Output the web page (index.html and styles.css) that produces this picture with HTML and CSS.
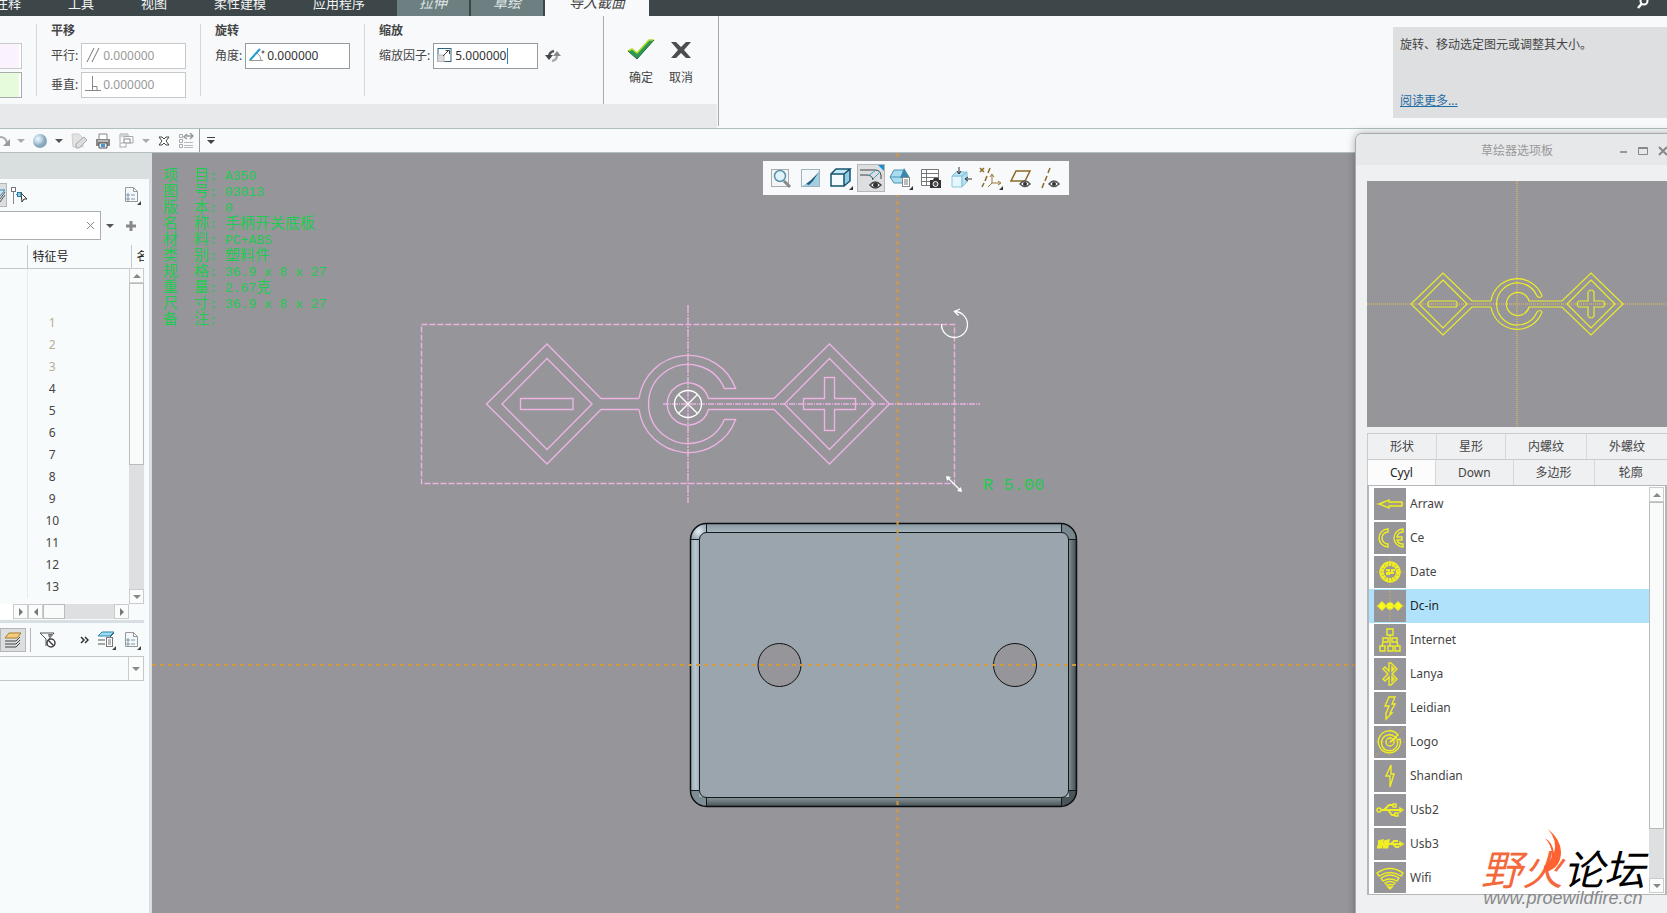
FILE: index.html
```html
<!DOCTYPE html>
<html lang="zh-CN">

<head>
  <meta charset="UTF-8" />
  <meta name="viewport" content="width=device-width, initial-scale=1.0">
  <title>导入截面</title>
  <link rel="stylesheet" href="styles.css">
</head>

<body>
  <nav class="menubar">
    <a href="#">注释</a>
    <a href="#">工具</a>
    <a href="#">视图</a>
    <a href="#">柔性建模</a>
    <a href="#">应用程序</a>
    <div class="tabs">
      <button class="tab">拉伸</button>
      <button class="tab">草绘</button>
      <button class="tab active">导入截面</button>
    </div>
    <button class="menu-search" aria-label="搜索">
      <svg width="12" height="12" viewBox="0 0 12 12"><circle cx="7" cy="4" r="3.5" fill="none" stroke="#fff" stroke-width="2"/><path d="M4.500 7 1 11" stroke="#fff" stroke-width="2.500"/></svg>
    </button>
  </nav>

  <header class="ribbon">
    <div class="ribbon-main">
      <div class="groups">
        <div class="group refs">
          <input type="text" class="ref ref-pink" aria-label="参考 1">
          <input type="text" class="ref ref-green" aria-label="参考 2">
        </div>
        <div class="group">
          <h3>平移</h3>
          <div class="field">
            <label for="parallel">平行:</label>
            <div class="box">
              <svg width="16" height="18" viewBox="0 0 16 18"><path d="M2 16 9 2M7 16 14 2" stroke="#777" fill="none"/></svg>
              <input type="text" id="parallel" value="0.000000" disabled>
            </div>
          </div>
          <div class="field">
            <label for="vertical">垂直:</label>
            <div class="box">
              <svg width="16" height="18" viewBox="0 0 16 18"><path d="M0 15.500h16M7.500 1v14M8 11.500h4V15" stroke="#888" fill="none"/></svg>
              <input type="text" id="vertical" value="0.000000" disabled>
            </div>
          </div>
        </div>
        <div class="group">
          <h3>旋转</h3>
          <div class="field">
            <label for="angle">角度:</label>
            <div class="box enabled">
              <svg width="16" height="18" viewBox="0 0 16 18"><path d="M1 14 11 3" stroke="#1f9ad6" stroke-width="2"/><path d="M0 14.500h14M8 7q4 3 4 7" stroke="#999" fill="none"/><circle cx="14" cy="6" r="1" fill="none" stroke="#444"/></svg>
              <input type="text" id="angle" value="0.000000">
            </div>
          </div>
        </div>
        <div class="group scale">
          <h3>缩放</h3>
          <div class="field">
            <label for="factor">缩放因子:</label>
            <div class="box enabled">
              <svg width="16" height="18" viewBox="0 0 16 18"><rect x="1" y="2.500" width="13" height="13" fill="#fff" stroke="#2a6480"/><rect x="1" y="9" width="6" height="6.500" fill="#ddd" stroke="#bbb"/><path d="m6 10 6-6M8.500 4.500h4V8" fill="none" stroke="#444"/></svg>
              <input type="text" id="factor" value="5.000000">
              <span class="caret"></span>
            </div>
            <button class="flip" aria-label="反向">
              <svg width="16" height="14" viewBox="0 0 16 14"><path d="M4 8q0-5 5-6" fill="none" stroke="#555" stroke-width="2.500"/><path d="M0 6h8L4 11z" fill="#444"/><path d="M12 6q0 5-5 6" fill="none" stroke="#aaa" stroke-width="2.500"/><path d="M8 7h8l-4-5z" fill="#888"/></svg>
            </button>
          </div>
        </div>
        <div class="group confirm">
          <button>
            <svg width="30" height="22" viewBox="0 0 30 22"><path d="m2 12 4-2 5 4L23 1h5L11 20z" fill="#2b9a52"/><path d="m2 12 4-2 5 4L23 1h5" fill="none" stroke="#b4d92c" stroke-width="1.500"/><path d="m2 12 9 8L28 1" fill="none" stroke="#1d6b3b"/></svg>
            确定
          </button>
          <button>
            <svg width="22" height="22" viewBox="0 0 22 22"><path d="M1 3h5l5 5 5-5h5l-7 8 7 8h-5l-5-5-5 5H1l7-8z" fill="#4b4d4f"/></svg>
            取消
          </button>
        </div>
      </div>
      <div class="ribbon-foot"></div>
    </div>
    <div class="help">
      <p>旋转、移动选定图元或调整其大小。</p>
      <a href="#">阅读更多...</a>
    </div>
  </header>

  <div class="quickbar">
    <button aria-label="重做"><svg width="10" height="16" viewBox="0 0 10 16"><path d="M0 4q6 0 7 6" fill="none" stroke="#aaa" stroke-width="2"/><path d="M10 6v7H3z" fill="#999"/></svg></button>
    <i class="arrow dim"></i>
    <button class="sphere" aria-label="着色"><svg width="16" height="16" viewBox="0 0 16 16"><defs><radialGradient id="ball" cx=".35" cy=".35"><stop offset="0" stop-color="#f2f8fc"/><stop offset=".6" stop-color="#b4cfe2"/><stop offset="1" stop-color="#8aa6bb"/></radialGradient></defs><circle cx="8" cy="8" r="7" fill="url(#ball)"/></svg></button>
    <i class="arrow"></i>
    <button aria-label="拭除"><svg width="16" height="16" viewBox="0 0 16 16"><path d="M1 1h7l4 4v9H2z" fill="#e2e2e2" stroke="#ccc"/><path d="m5 11 8-7 3 3-8 8H5z" fill="#ddd" stroke="#aaa"/></svg></button>
    <button aria-label="打印"><svg width="16" height="16" viewBox="0 0 16 16"><path d="M4 7V1h8v6" fill="#fff" stroke="#888"/><path d="M1 6h14v7H1z" fill="#888"/><path d="M3 8h10" stroke="#eee"/><path d="M4 10h8v5H4z" fill="#e8f3fa" stroke="#555"/><path d="M6 11h4v3H6z" fill="#4d94c7"/></svg></button>
    <button aria-label="窗口"><svg width="16" height="16" viewBox="0 0 16 16"><path d="M1 9V1h8v2M5 5V3.500h9V10h-3M2 3h6" fill="none" stroke="#aaa"/><rect x="5" y="6" width="6" height="4" fill="#fff" stroke="#888"/><rect x="1" y="10" width="6" height="4" fill="#fff" stroke="#aaa"/></svg></button>
    <i class="arrow dim"></i>
    <button aria-label="关闭窗口"><svg width="12" height="12" viewBox="0 0 12 12"><path d="M1 2h3l2 2 2-2h3L8 6l3 4H8L6 8l-2 2H1l3-4z" fill="#fff" stroke="#444"/></svg></button>
    <button aria-label="选项"><svg width="16" height="16" viewBox="0 0 16 16"><path d="M1.500 1.500h3v3h-3zM1.500 6.500h3v3h-3zM1.500 11.500h3v3h-3z" fill="none" stroke="#aaa"/><path d="M6 9.500h9M6 12.500h9M6 14.500h9" stroke="#bbb"/><path d="M8 3h6M12 0l3 3-3 3M9 1 6 4l3 2" fill="none" stroke="#999" stroke-width="1.500"/></svg></button>
    <button class="more" aria-label="更多"><svg width="10" height="10" viewBox="0 0 10 10"><path d="M1 1h8v1H1zM1 4h8L5 8z" fill="#444"/></svg></button>
  </div>

  <div class="workspace">
    <aside class="tree">
      <div class="tree-cap"></div>
      <div class="tree-tools">
        <button class="pressed cut" aria-label="模型树"><svg width="6" height="18" viewBox="0 0 6 18"><path d="M0 4h5l-5 6" fill="none" stroke="#268fc0"/><path d="M0 13l5-7M0 16l5-7" fill="none" stroke="#555"/></svg></button>
        <button class="pick" aria-label="选择"><svg width="17" height="17" viewBox="0 0 17 17"><path d="M2.500 5v12M5 7.500h2" stroke="#888"/><rect x=".5" y=".5" width="4" height="4" fill="#fff" stroke="#777"/><rect x="6.500" y="5.500" width="4" height="4" fill="#7fd3f3" stroke="#287a9c"/><path d="m10 6 1 9 2-3h3z" fill="#fff" stroke="#333"/></svg></button>
        <button class="report" aria-label="设置"><svg width="17" height="20" viewBox="0 0 17 20"><path d="M1.500 2.500h8l4 4v10h-12z" fill="#f4f8fa" stroke="#999"/><path d="M9.500 2.500v4h4" fill="none" stroke="#999"/><path d="M3 9h2v2H3zM3 13h2v2H3z" fill="none" stroke="#7e99ad"/><path d="M7 10h4M7 14h4" stroke="#7e99ad"/><path d="M17 16v4h-4z" fill="#444"/></svg></button>
      </div>
      <div class="tree-search">
        <input type="text" aria-label="搜索模型树">
        <button class="clear" aria-label="清除"><svg width="9" height="9" viewBox="0 0 9 9"><path d="m1 1 7 7M8 1 1 8" stroke="#888"/></svg></button>
        <i class="arrow"></i>
        <button class="add" aria-label="添加"><svg width="12" height="12" viewBox="0 0 12 12"><path d="M6 1v10M1 6h10" stroke="#888" stroke-width="3"/></svg></button>
      </div>
      <div class="tree-body">
        <table>
          <thead>
            <tr><th></th><th>特征号</th><th>名称</th></tr>
          </thead>
          <tbody>
            <tr><td></td><td></td><td></td></tr>
            <tr><td></td><td></td><td></td></tr>
            <tr class="dim"><td></td><td>1</td><td></td></tr>
            <tr class="dim"><td></td><td>2</td><td></td></tr>
            <tr class="dim"><td></td><td>3</td><td></td></tr>
            <tr><td></td><td>4</td><td></td></tr>
            <tr><td></td><td>5</td><td></td></tr>
            <tr><td></td><td>6</td><td></td></tr>
            <tr><td></td><td>7</td><td></td></tr>
            <tr><td></td><td>8</td><td></td></tr>
            <tr><td></td><td>9</td><td></td></tr>
            <tr><td></td><td>10</td><td></td></tr>
            <tr><td></td><td>11</td><td></td></tr>
            <tr><td></td><td>12</td><td></td></tr>
            <tr><td></td><td>13</td><td></td></tr>
          </tbody>
        </table>
        <div class="vscroll">
          <b class="up"></b>
          <div class="thumb"></div>
          <b class="down"></b>
        </div>
      </div>
      <div class="hscroll">
        <div class="names"><b class="right"></b></div>
        <b class="left"></b>
        <div class="thumb"></div>
        <b class="right"></b>
      </div>
      <div class="tree-foot">
        <button class="pressed" aria-label="层"><svg width="18" height="18" viewBox="0 0 18 18"><path d="M5 2h12l-4 5H1z" fill="#f5cd7d" stroke="#a77a2c"/><path d="M1 10h11l4-4M1 13h11l4-4M1 16h11l4-4" fill="none" stroke="#444"/></svg></button>
        <span class="sep"></span>
        <button class="filter" aria-label="过滤"><svg width="18" height="18" viewBox="0 0 18 18"><path d="M1 2h14l-5 6v2M1 2l6 6v7" fill="none" stroke="#555"/><path d="M9 3h5l-4 4z" fill="#777"/><circle cx="12" cy="12" r="4" fill="#fff" stroke="#444" stroke-width="1.500"/><path d="m9 9 6 6" stroke="#444" stroke-width="1.500"/></svg></button>
        <button class="chev" aria-label="更多"><svg width="9" height="8" viewBox="0 0 9 8"><path d="m1 1 3 3-3 3M5 1l3 3-3 3" fill="none" stroke="#333" stroke-width="1.500"/></svg></button>
        <button aria-label="层显示"><svg width="19" height="20" viewBox="0 0 19 20"><path d="M5 2h12l-4 4H1z" fill="#9edcf5" stroke="#2b85ab"/><path d="M1 10h7M1 14h7M13 7l4-4" stroke="#555"/><rect x="9.500" y="7.500" width="6" height="9" fill="#fff" stroke="#777"/><path d="M11 10h3M11 12h3M11 14h3" stroke="#777"/><path d="M19 16v4h-4z" fill="#444"/></svg></button>
        <button aria-label="层设置"><svg width="17" height="20" viewBox="0 0 17 20"><path d="M1.500 2.500h8l4 4v10h-12z" fill="#f4f8fa" stroke="#999"/><path d="M9.500 2.500v4h4" fill="none" stroke="#999"/><path d="M3 9h2v2H3zM3 13h2v2H3z" fill="none" stroke="#7e99ad"/><path d="M7 10h4M7 14h4" stroke="#7e99ad"/><path d="M17 16v4h-4z" fill="#444"/></svg></button>
      </div>
      <div class="combo">
        <select aria-label="层模型"><option></option></select>
        <b class="down"></b>
      </div>
    </aside>

    <main class="canvas">
      <svg class="drawing" viewBox="152 153 1515 760" preserveAspectRatio="xMinYMin slice">
        <defs>
          <linearGradient id="rimTop" x1="0" y1="0" x2="0" y2="1"><stop offset="0" stop-color="#8b99a1"/><stop offset="1" stop-color="#a9b7c1"/></linearGradient>
          <linearGradient id="rimLeft"><stop offset="0" stop-color="#9fadb6"/><stop offset=".6" stop-color="#b9c7d1"/><stop offset="1" stop-color="#a3b0b9"/></linearGradient>
          <linearGradient id="rimRight"><stop offset="0" stop-color="#879299"/><stop offset="1" stop-color="#3d484c"/></linearGradient>
          <linearGradient id="rimBottom" x1="0" y1="0" x2="0" y2="1"><stop offset="0" stop-color="#8c989f"/><stop offset="1" stop-color="#4a5559"/></linearGradient>
          <radialGradient id="shine"><stop offset="0" stop-color="#e4f0f7"/><stop offset="1" stop-color="#9fadb6"/></radialGradient>
        </defs>

        <!-- part -->
        <rect x="690.500" y="523.500" width="386" height="283" rx="16" fill="url(#rimLeft)"/>
        <path d="M691 539.500a16 16 0 0 1 15.500-16v9a7 7 0 0 0-7 7z" fill="url(#shine)"/>
        <path d="M1061 524a16 16 0 0 1 16 16h-9a7 7 0 0 0-7-7z" fill="#78868d"/>
        <path d="M691 790a16 16 0 0 0 16 16v-9h-8v-7z" fill="#7e8c93"/>
        <path d="M1077 790a16 16 0 0 1-16 16v-9h8v-7z" fill="#4a5559"/>
        <path d="M706.500 524H1061v9H706.500z" fill="url(#rimTop)"/>
        <path d="M691 539.500h8V790h-8z" fill="url(#rimLeft)"/>
        <path d="M1068 539.500h9V790h-9z" fill="url(#rimRight)"/>
        <path d="M706.500 797H1061v9H706.500z" fill="url(#rimBottom)"/>
        <rect x="690.500" y="523.500" width="386" height="283" rx="16" fill="none" stroke="#0b0f11" stroke-width="1.500"/>
        <rect x="699.500" y="532.500" width="369" height="265" rx="7" fill="#9aa5ad" stroke="#15191b"/>
        <path d="M706.500 524v9M1061.500 524v9M706.500 797v9M1061.500 797v9M691 539.500h8M691 790.500h8M1068 539.500h9M1068 790.500h9" stroke="#15191b"/>
        <circle cx="779.500" cy="665" r="21.500" fill="#96959a" stroke="#111"/>
        <circle cx="1015" cy="665" r="21.500" fill="#96959a" stroke="#111"/>

        <!-- datum planes -->
        <path d="M897.500 153v760M152 665h1205" stroke="#cf9b45" stroke-width="2" stroke-dasharray="4 4" fill="none"/>

        <!-- imported section -->
        <g fill="none" stroke="#ecb3e3" stroke-width="1.400">
          <path d="M421.500 324.500h533v159h-533z" stroke-dasharray="6 2"/>
          <path d="M688 305v198" stroke-dasharray="8 1 2 1"/>
          <path d="M663 404h317" stroke-dasharray="6 1 1 1"/>
          <path d="M639 398.500H601L547 344l-60.500 60L547 464l54-54.500h38"/>
          <path d="m547 358.500 45 45.500-45 45.500-45-45.500z"/>
          <path d="M520.500 398.500h52.500v11h-52.500z"/>
          <path d="M639 398.500a50 50 0 0 1 96.600-10H724.400a39.500 39.500 0 1 0 0 31h11.200a50 50 0 0 1-96.600-10"/>
          <path d="M774 398.500h-65.500a21 21 0 1 0 0 11H774l55.500 54.500 60-60-60-60z"/>
          <path d="m829.500 358.500 45 45.500-45 45.500-45-45.500z"/>
          <path d="M824.500 377.500h10v21h21v11h-21v21h-10v-21h-21v-11h21z"/>
        </g>
        <g fill="none" stroke="#fff" stroke-width="1.300">
          <circle cx="688" cy="404" r="13.500"/>
          <path d="m678.500 394.500 19 19M697.500 394.500l-19 19"/>
          <path d="M941.500 324a13 13 0 1 0 13-12.500M960 309l-5.500 2.500 4 4"/>
          <path d="m948 478 12 12"/>
        </g>
        <path d="m946 476 5 1-4 4zM962 492l-1-5-4 4z" fill="#fff"/>
      </svg>

      <dl class="props">
        <dt><span>项</span><span>目</span></dt><dd>A350</dd>
        <dt><span>图</span><span>号</span></dt><dd>03013</dd>
        <dt><span>版</span><span>本</span></dt><dd>0</dd>
        <dt><span>名</span><span>称</span></dt><dd><span>手柄开关底板</span></dd>
        <dt><span>材</span><span>料</span></dt><dd>PC+ABS</dd>
        <dt><span>类</span><span>别</span></dt><dd><span>塑料件</span></dd>
        <dt><span>规</span><span>格</span></dt><dd>36.9 x 8 x 27</dd>
        <dt><span>重</span><span>量</span></dt><dd>2.67<span>克</span></dd>
        <dt><span>尺</span><span>寸</span></dt><dd>36.9 x 8 x 27</dd>
        <dt><span>备</span><span>注</span></dt><dd></dd>
      </dl>
      <div class="dim-label">R 5.00</div>

      <div class="viewbar">
        <button aria-label="重新调整"><svg width="22" height="22" viewBox="0 0 22 22"><rect x="1.500" y="2.500" width="17" height="17" fill="#f5f5f5" stroke="#aaa"/><path d="m14 14 6 6" stroke="#888" stroke-width="3"/><circle cx="10" cy="9" r="5.500" fill="#dff3fb" stroke="#5b90ab" stroke-width="1.500"/></svg></button>
        <button aria-label="重画"><svg width="22" height="22" viewBox="0 0 22 22"><rect x="1.500" y="2.500" width="18" height="17" fill="#a5cfe0" stroke="#9db4bf"/><path d="M2 3h17q-2 9-10 12L2 19z" fill="#f4f8fa"/><path d="m6 17 5-4 8-8-6 9-4 4z" fill="#1e5f7d"/></svg></button>
        <button aria-label="显示样式"><svg width="24" height="24" viewBox="0 0 24 24"><path d="M2 8h13v12H2z" fill="#f4fbfe"/><path d="m2 8 5-5h14l-6 5z" fill="#c3e9f7"/><path d="m15 8 6-5v12l-6 5z" fill="#8fcde6"/><path d="M2 8h13v12H2zM2 8l5-5h14l-6 5M21 3v12l-6 5" fill="none" stroke="#16536e" stroke-width="1.500"/><path d="M24 20v4h-4z" fill="#333"/></svg></button>
        <button class="pressed" aria-label="草绘显示"><svg width="26" height="26" viewBox="0 0 26 26"><path d="M20 0h6v6z" fill="#1c8fd3"/><path d="M2 5h15q5 0 6 5v4M2 10h7q5 0 6 5" fill="none" stroke="#444"/><path d="m10 11 8-6M15 14l7-7" stroke="#3aa4ce"/><path d="M12 20q5-6 11 0-6 6-11 0z" fill="#fff" stroke="#444" stroke-width="1.500"/><circle cx="17.500" cy="20" r="2.500" fill="#333"/></svg></button>
        <button aria-label="已保存方向"><svg width="24" height="24" viewBox="0 0 24 24"><path d="m1 11 4-7h9l3 7-3 6H5z" fill="#a9dcf0" stroke="#4a93b0"/><path d="M1 11h16" stroke="#4a93b0"/><path d="m15 2 6 10h-10z" fill="#3c88ab"/><rect x="13.500" y="11.500" width="7" height="9" fill="#fff" stroke="#888"/><path d="M15 14h4M15 16h4M15 18h4" stroke="#777"/><path d="M24 20v4h-4z" fill="#333"/></svg></button>
        <button aria-label="视图管理器"><svg width="22" height="22" viewBox="0 0 22 22"><path d="M1.500 2.500h17v16h-17zM1.500 6.500h17M1.500 10.500h17M1.500 14.500h17M6.500 2.500v16" fill="#fff" stroke="#777"/><path d="M10 13h3l1-2h4l1 2h2v8H10z" fill="#333"/><circle cx="15.500" cy="17" r="2.500" fill="#555" stroke="#fff"/></svg></button>
        <button aria-label="透视图"><svg width="22" height="22" viewBox="0 0 22 22"><path d="M2 9h10v11H2z" fill="#e5f6fc" stroke="#8ec9df"/><path d="m2 9 4-4h11l-5 4zM12 9l5-4v10l-5 5z" fill="#b4e0f0" stroke="#86c2d8"/><path d="M9 0v6M7 4l2 3 2-3M22 12h-6M18 10l-3 2 3 2" fill="none" stroke="#333"/></svg></button>
        <button aria-label="基准显示"><svg width="24" height="24" viewBox="0 0 24 24"><path d="m1 2 4 4M5 2 1 6M11 2 9 7M8 10l-2 5M5 17l-2 4" stroke="#8a6a25" stroke-width="1.500"/><path d="M13 9v8h8M13 17l-4 4M11 11l2-3 2 3M19 15l3 2-3 2" fill="none" stroke="#9a7a33"/><path d="M24 20v4h-4z" fill="#333"/></svg></button>
        <button aria-label="平面显示"><svg width="22" height="22" viewBox="0 0 22 22"><path d="M6 4h14l-5 10H1z" fill="none" stroke="#8a6a25" stroke-width="1.500"/><path d="M10 17q5-6 10 0-5 5-10 0z" fill="#fff" stroke="#555" stroke-width="1.500"/><circle cx="15" cy="17" r="2" fill="#333"/></svg></button>
        <button aria-label="轴显示"><svg width="22" height="22" viewBox="0 0 22 22"><path d="M10 1 8 6M7 9l-2 5M4 16l-2 5" stroke="#8a6a25" stroke-width="1.500"/><path d="M9 17q5-6 10 0-5 5-10 0z" fill="#fff" stroke="#555" stroke-width="1.500"/><circle cx="14" cy="17" r="2" fill="#333"/></svg></button>
      </div>
    </main>
  </div>

  <section class="palette">
    <div class="palette-title">
      <h2>草绘器选项板</h2>
      <div class="win-buttons">
        <button aria-label="最小化"><svg width="10" height="10" viewBox="0 0 10 10"><path d="M2 6h7" stroke="#999" stroke-width="2"/></svg></button>
        <button aria-label="最大化"><svg width="10" height="10" viewBox="0 0 10 10"><path d="M.5 1.500h9v7h-9zM1 2.500h8" fill="none" stroke="#888"/></svg></button>
        <button aria-label="关闭"><svg width="10" height="10" viewBox="0 0 10 10"><path d="m1 1 8 8M9 1 1 9" stroke="#888" stroke-width="2"/></svg></button>
      </div>
    </div>
    <div class="palette-body">
      <svg class="preview" width="300" height="246" viewBox="1367 182 300 246">
        <path d="M1517 182v246M1367 305h300" stroke="#d8b466" stroke-width="1.500" stroke-dasharray="1 1"/>
        <g fill="none" stroke="#ecec2b" stroke-width="1.200">
          <path d="M1491 302h-19l-29-28-32 31 32 31 29-28h19"/>
          <path d="m1443 281 24 24-24 24-24-24z"/>
          <rect x="1428" y="302" width="29" height="6" rx="2"/>
          <path d="M1491 302a26.500 26.500 0 0 1 51-5q-2 3-5 0a21 21 0 1 0 0 16q3-3 5 0a26.500 26.500 0 0 1-51-5"/>
          <path d="M1562 302h-33a11.500 11.500 0 1 0 0 6h33l29 28 32-31-32-31z"/>
          <path d="m1591 281 24 24-24 24-24-24z"/>
          <path d="M1588 293q3-4 6 0v9h9q4 3 0 6h-9v9q-3 4-6 0v-9h-9q-4-3 0-6h9z"/>
        </g>
      </svg>
      <div class="cats">
        <button>形状</button><button>星形</button><button>内螺纹</button><button>外螺纹</button>
      </div>
      <div class="cats">
        <button class="active">Cyyl</button><button>Down</button><button>多边形</button><button>轮廓</button>
      </div>
      <div class="list">
        <ul>
          <li><button><svg class="thumb-icon" viewBox="0 0 32 32"><path d="M2 16h29" class="axis"/><path d="m5 16 10-4v2h13v4H15v2z"/></svg>Arraw</button></li>
          <li><button><svg class="thumb-icon" viewBox="0 0 32 32"><path d="M14 7A9 9 0 0 0 14 25v-3a6 6 0 0 1 0-12zM29 7a9 9 0 0 0 0 18v-3q-5 0-6-4h5v-3h-5q1-5 6-5z"/></svg>Ce</button></li>
          <li><button><svg class="thumb-icon" viewBox="0 0 32 32"><path d="M2 16h29M16 1v30" class="axis"/><circle cx="16" cy="16" r="8" stroke-width="4" stroke-dasharray="3 .6"/><circle cx="16" cy="16" r="10"/><path d="M12 14h3v4h-3M18 18v-4h3M12 17h8" stroke-width="2"/></svg>Date</button></li>
          <li class="selected"><button><svg class="thumb-icon solid" viewBox="0 0 32 32"><path d="M2 16h29M16 1v30" class="axis"/><path d="m4 16 4-4 4 4-4 4zM20 16l4-4 4 4-4 4z"/><circle cx="16" cy="16" r="3"/><path d="M8 16h16"/></svg>Dc-in</button></li>
          <li><button><svg class="thumb-icon" viewBox="0 0 32 32"><path d="M13 5h6v6h-6zM9 14h5v4H9zM18 14h5v4h-5zM6 22h5v5H6zM14 22h5v5h-5zM21 22h5v5h-5zM16 11v11M9 18l-1 4M23 18l1 4"/></svg>Internet</button></li>
          <li><button><svg class="thumb-icon" viewBox="0 0 32 32"><path d="m9 11 2-2 4 4V5h2l6 6-5 5 5 5-6 6h-2v-8l-4 4-2-2 5-5zM18 9l2 2-2 2zM18 19l2 2-2 2z"/></svg>Lanya</button></li>
          <li><button><svg class="thumb-icon" viewBox="0 0 32 32"><path d="M15 5h6l-3 7h3l-5 9h2l-6 6v-6l1-2 2-5h-4z"/></svg>Leidian</button></li>
          <li><button><svg class="thumb-icon" viewBox="0 0 32 32"><path d="M2 16h29M16 1v30M1 31 31 1" class="axis"/><path d="M24 9a11 11 0 1 0 2 4l-3 1a8 8 0 1 1-2-3z"/><circle cx="16" cy="16" r="4"/><path d="m16 16 7-5" stroke-width="2"/></svg>Logo</button></li>
          <li><button><svg class="thumb-icon" viewBox="0 0 32 32"><path d="m17 5-5 11h4v11l4-13h-3z"/></svg>Shandian</button></li>
          <li><button><svg class="thumb-icon" viewBox="0 0 32 32"><circle cx="5" cy="16" r="2"/><path d="M7 16h20M10 16l5-5h4M14 16l4 5h3" stroke-width="2"/><path d="m26 14 3 2-3 2zM19 10h3v3h-3zM21 19h3v3h-3z"/></svg>Usb2</button></li>
          <li><button><svg class="thumb-icon" viewBox="0 0 32 32"><path d="m4 14 4-1-1 6H3M10 14l4-1-1 6H9M4 16h9" stroke-width="3"/><path d="M14 16h13M17 16l3-3h4M19 16l3 3h3" stroke-width="2"/><path d="m26 14 3 2-3 2z"/></svg>Usb3</button></li>
          <li><button><svg class="thumb-icon" viewBox="0 0 32 32"><path d="M3 11q13-9 26 0l-2 3q-11-7-22 0zM7 16q9-6 18 0l-2 3q-7-4-14 0zM11 21q5-3 10 0l-2 2q-3-1-6 0zM14 25h4l-2 2z"/></svg>Wifi</button></li>
        </ul>
        <div class="vscroll">
          <b class="up"></b>
          <div class="thumb"></div>
          <b class="down"></b>
        </div>
      </div>
    </div>
  </section>

  <div class="watermark">
    <div class="brand"><span>野火</span>论坛</div>
    <div class="site">www.proewildfire.cn</div>
    <svg class="flame" width="18" height="44" viewBox="0 0 18 44"><path d="M5 0q13 11 13 23 0 14-12 19-6 1-5-5 7-4 8-11 0-9-7-17 8 5 9 15 4-12-6-24z" fill="#ff6230"/></svg>
  </div>
</body>

</html>
```
FILE: styles.css
```css
* {
  margin: 0;
  padding: 0;
  box-sizing: border-box;
}

body {
  height: 100vh;
  display: flex;
  flex-direction: column;
  position: relative;
  overflow: hidden;
  background: #f8f9fb;
  color: #444;
  font-family: "Noto Sans", "Noto Sans CJK SC", sans-serif;
  font-size: 12px;
  line-height: 18px;
}

button,
input,
select {
  font: inherit;
  color: inherit;
  border: none;
  background: none;
}

button {
  display: flex;
  align-items: center;
  justify-content: center;
}

svg {
  display: block;
  flex: none;
}

/* menu */
.menubar {
  flex: none;
  height: 26px;
  margin-top: -10px;
  display: flex;
  align-items: center;
  gap: 47px;
  background: #3d474a;
  font-size: 13px;
  line-height: 16px;
}

.menubar a {
  color: #f2f4f4;
  text-decoration: none;
}

.menubar a:first-child {
  margin-left: -5px;
}

.tabs {
  display: flex;
  align-self: stretch;
  gap: 2px;
  margin-left: -15px;
}

.tab {
  padding: 0 22px;
  background: #6d7f80;
  color: #dfe6e6;
  font-size: 14px;
  font-style: italic;
}

.tab.active {
  padding: 0 24px;
  background: #f8f9fb;
  color: #444;
}

.menu-search {
  margin-left: auto;
  margin-right: 18px;
}

/* ribbon */
.ribbon {
  flex: none;
  height: 113px;
  display: flex;
  justify-content: space-between;
  border-bottom: 1px solid #afbfc0;
}

.ribbon-main {
  border-right: 1px solid #a5a8aa;
  margin-bottom: 2px;
}

.groups {
  display: flex;
  height: 88px;
}

.ribbon-foot {
  height: 24px;
  margin-right: 1px;
  background: #e8e9eb;
}

.group {
  width: 164px;
  padding: 6px 0 0 14px;
  position: relative;
  display: flex;
  flex-direction: column;
  gap: 3px;
}

.group:not(.scale):not(.confirm)::after {
  content: "";
  position: absolute;
  right: 0;
  top: 8px;
  width: 1px;
  height: 72px;
  background: #d6d9db;
}

.group h3 {
  font-size: 12px;
  line-height: 18px;
}

.refs {
  width: 37px;
  padding: 27px 0 0;
}

.ref {
  width: 22px;
  height: 26px;
  border: 1px solid #c8cacc;
  border-left: none;
  box-shadow: inset -2px 0 0 #fff;
}

.ref-pink {
  background: #faf3fd;
}

.ref-green {
  background: #e6fbdc;
  border-color: #aaa;
}

.field {
  display: flex;
  align-items: center;
  gap: 3px;
}

.box {
  position: relative;
  width: 105px;
  height: 26px;
}

.box svg {
  position: absolute;
  left: 4px;
  top: 3px;
}

.box input {
  width: 100%;
  height: 100%;
  padding: 0 0 2px 21px;
  background: #fff;
  border: 1px solid #c6c8ca;
  color: #999;
}

.box.enabled input {
  border-color: #999c9e;
  color: #333;
}

.caret {
  position: absolute;
  left: 74px;
  top: 5px;
  width: 1px;
  height: 16px;
  background: #2c7fc4;
}

.flip {
  margin-left: 4px;
}

.group.scale {
  width: 239px;
  border-right: 1px solid #aaadaf;
}

.group.confirm {
  width: 114px;
  flex-direction: row;
  align-items: flex-start;
  gap: 10px;
  padding: 23px 0 0 22px;
}

.confirm button {
  flex-direction: column;
  gap: 8px;
  width: 30px;
  white-space: nowrap;
}

.help {
  width: 274px;
  height: 91px;
  margin-top: 11px;
  padding: 9px 7px;
  display: flex;
  flex-direction: column;
  justify-content: space-between;
  align-items: flex-start;
  background: #dedfe1;
}

.help a {
  color: #1f6ca3;
  line-height: 16px;
}

/* quick access bar */
.quickbar {
  flex: none;
  height: 24px;
  display: flex;
  align-items: center;
  gap: 8px;
  border-bottom: 1px solid #b3bfc2;
  background: #f9fafc;
}

.quickbar .arrow {
  margin: 0 0 0 -1px;
}

.arrow {
  flex: none;
  border: 4px solid transparent;
  border-top-color: #555;
  border-bottom: none;
}

.arrow.dim {
  border-top-color: #aaa;
}

.more {
  height: 100%;
  padding-left: 6px;
  margin-left: -3px;
  border-left: 1px solid #999fa1;
}

.quickbar .sphere {
  margin-left: -1px;
}

.workspace {
  flex: 1;
  min-height: 0;
  display: flex;
}

/* model tree */
.tree {
  width: 152px;
  flex: none;
  background: #f8fbfb;
  border-right: 3px solid #d8dee1;
  padding-right: 5px;
}

.tree-cap {
  height: 26px;
  margin-right: -5px;
  background: #d9dfdf;
}

.tree-tools {
  height: 32px;
  display: flex;
  align-items: center;
}

.pressed {
  background: #dcdedf;
  border: 1px solid #b4b6b8;
}

.tree-tools .cut {
  height: 24px;
  border-left: none;
}

.pick {
  margin-left: 4px;
}

.report {
  margin-left: auto;
  margin-right: 3px;
}

.tree-search {
  height: 29px;
  display: flex;
  align-items: center;
  position: relative;
}

.tree-search input {
  width: 101px;
  height: 29px;
  background: #fff;
  border: 1px solid #aaaeb0;
  border-left: none;
}

.clear {
  position: absolute;
  left: 86px;
}

.tree-search .arrow {
  margin: 0 11px 0 5px;
}

.tree-body {
  height: 364px;
  position: relative;
  overflow: hidden;
  padding-top: 5px;
}

.tree-body table {
  width: 144px;
  table-layout: fixed;
  border-collapse: collapse;
}

.tree-body th {
  height: 23px;
  padding: 2px 0 0 5px;
  border-right: 1px solid #c3c8ca;
  border-bottom: 1px solid #c3c8ca;
  color: #222;
  font-weight: normal;
  text-align: left;
  overflow: hidden;
  white-space: nowrap;
}

.tree-body th:first-child {
  width: 27px;
}

.tree-body th:last-child {
  width: 13px;
  border-right: none;
}

.tree-body td {
  height: 22px;
  border-right: 1px solid #e8ebec;
  padding-right: 54px;
  text-align: center;
}

.tree-body td:first-child,
.tree-body td:last-child {
  padding: 0;
}

.tree-body td:nth-child(2),
.tree-body td:last-child {
  border-right: none;
}

.tree-body .dim {
  color: #b8ae98;
}

.vscroll {
  width: 15px;
  display: flex;
  flex-direction: column;
  background: #dedfe1;
}

.tree-body .vscroll {
  position: absolute;
  right: 0;
  top: 28px;
  bottom: 0;
}

.tree-body .thumb {
  height: 182px;
}

.thumb {
  background: #f9fafa;
  border: 1px solid #b9bbbd;
}

.vscroll b,
.hscroll b,
.combo b {
  width: 15px;
  height: 15px;
  flex: none;
  display: flex;
  align-items: center;
  justify-content: center;
  background: #fafbfb;
  border: 1px solid #c9cbcd;
}

.vscroll .down {
  margin-top: auto;
}

b::before {
  content: "";
  border: 4px solid transparent;
}

.up::before {
  border-top: none;
  border-bottom-color: #888;
}

.down::before {
  border-bottom: none;
  border-top-color: #888;
}

.left::before {
  border-left: none;
  border-right-color: #777;
}

.right::before {
  border-right: none;
  border-left-color: #777;
}

.hscroll {
  height: 15px;
  margin-right: 15px;
  display: flex;
  background: #dedfe1;
}

.hscroll .thumb {
  width: 22px;
  margin-right: auto;
}

.names {
  width: 28px;
  display: flex;
  justify-content: flex-end;
  background: #fff;
}

.tree-foot {
  height: 36px;
  margin-top: 1px;
  border-top: 3px solid #d8dee1;
  display: flex;
  align-items: center;
  gap: 8px;
}

.tree-foot .pressed {
  width: 26px;
  height: 24px;
}

.tree-foot .sep {
  width: 1px;
  height: 24px;
  margin-left: -4px;
  background: #b4b6b8;
}

.tree-foot .chev {
  margin: 0 0 0 15px;
}

.combo {
  height: 25px;
  display: flex;
  border: 1px solid #c3c8ca;
  border-left: none;
}

.combo select {
  flex: 1;
  min-width: 0;
  appearance: none;
}

.combo b {
  height: 100%;
  border-width: 0 0 0 1px;
}

/* graphics area */
.canvas {
  flex: 1;
  min-width: 0;
  position: relative;
  background: #96959a;
}

.drawing {
  width: 100%;
  height: 100%;
}

.props {
  position: absolute;
  left: 11px;
  top: 16px;
  display: grid;
  grid-template-columns: 54px auto;
  column-gap: 8px;
  grid-auto-rows: 16px;
  line-height: 16px;
  color: #1fcb50;
  font-family: "Liberation Mono", "Noto Sans CJK SC", monospace;
  font-size: 13px;
}

.props span {
  font-size: 15px;
}

.props dt {
  display: flex;
  justify-content: space-between;
}

.props dt::after {
  content: ":";
  margin-left: -16px;
}

.dim-label {
  position: absolute;
  left: 831px;
  top: 324px;
  color: #1fcb50;
  font-family: "Liberation Mono", monospace;
  font-size: 17px;
}

.viewbar {
  position: absolute;
  left: 611px;
  top: 8px;
  height: 34px;
  padding: 0 4px;
  display: flex;
  align-items: center;
  gap: 2px;
  background: #f8f9fb;
}

.viewbar button {
  width: 28px;
  height: 28px;
}

/* sketcher palette window */
.palette {
  position: absolute;
  top: 133px;
  right: -12px;
  bottom: -8px;
  width: 324px;
  display: flex;
  flex-direction: column;
  background: #eff0f2;
  border: 1px solid #a9aaac;
  border-radius: 7px;
  box-shadow: 0 0 8px rgba(0, 0, 0, 0.3);
}

.palette-title {
  height: 31px;
  flex: none;
  position: relative;
  background: #e7e8ea;
  border-radius: 7px 7px 0 0;
}

.palette-title h2 {
  color: #999;
  font-size: 12px;
  font-weight: normal;
  line-height: 34px;
  text-align: center;
}

.win-buttons {
  position: absolute;
  top: 12px;
  right: 10px;
  display: flex;
  gap: 10px;
}

.palette-body {
  flex: 1;
  min-height: 0;
  display: flex;
  flex-direction: column;
  padding: 16px 11px 25px;
}

.preview {
  width: 100%;
  background: #96959a;
  margin-bottom: 6px;
}

.cats {
  display: flex;
  flex: none;
  height: 26px;
  border-top: 1px solid #c9cbcd;
  border-left: 1px solid #c9cbcd;
}

.cats button {
  padding: 0 22px;
  border-right: 1px solid #d5d7d9;
  white-space: nowrap;
}

.cats button:last-child {
  flex: 1;
  padding: 0;
  border-right: none;
}

.cats .active {
  background: #fcfcfd;
  color: #222;
}

.list {
  flex: 1;
  min-height: 0;
  display: flex;
  background: #fff;
  border: 1px solid #b4b6b8;
  border-width: 1px 2px;
  padding: 1px 1px 1px 0;
}

.list ul {
  flex: 1;
  overflow: hidden;
  list-style: none;
}

.list li button {
  width: 100%;
  height: 34px;
  padding-left: 5px;
  justify-content: flex-start;
  gap: 4px;
}

.list .selected {
  background: #b0e3fb;
  color: #222;
}

.list .thumb {
  height: 327px;
}

.thumb-icon {
  width: 32px;
  height: 32px;
  background: #96959a;
  fill: none;
  stroke: #f0ee22;
  stroke-width: 1.4;
}

.thumb-icon.solid {
  fill: #ffff1a;
}

.thumb-icon .axis {
  stroke: #c6a866;
  stroke-width: 1;
  stroke-dasharray: 2 1;
}

/* forum mark */
.watermark {
  position: absolute;
  right: 22px;
  bottom: 6px;
}

.brand {
  color: #000;
  font-family: "Noto Sans CJK SC", sans-serif;
  font-size: 41px;
  font-style: italic;
  line-height: 44px;
}

.brand span {
  color: #f4693c;
}

.site {
  color: #88898b;
  font-family: "Liberation Sans", sans-serif;
  font-size: 18px;
  font-style: italic;
  line-height: 18px;
  text-align: center;
}

.flame {
  position: absolute;
  left: 62px;
  top: -16px;
}
```
